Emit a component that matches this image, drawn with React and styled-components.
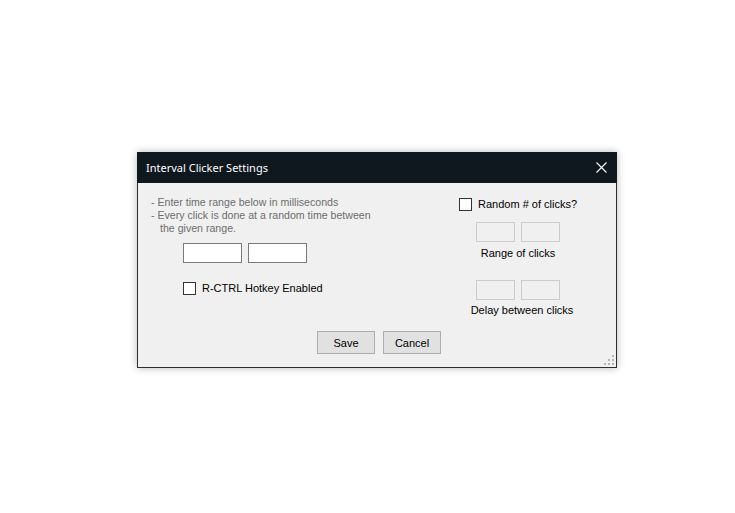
import styled, { createGlobalStyle } from "styled-components";

const GlobalStyle = createGlobalStyle`
  html, body {
    margin: 0;
    padding: 0;
    background: #ffffff;
  }
  body {
    font-family: "Liberation Sans", Arial, sans-serif;
  }
`;

const Page = styled.div`
  width: 735px;
  height: 513px;
  padding: 152px 0 0 137px;
  box-sizing: border-box;
`;

const Window = styled.div`
  position: relative;
  width: 480px;
  height: 216px;
  box-sizing: border-box;
  border: 1px solid #2e2e2e;
  border-top: none;
  background: #f0f0f0;
  box-shadow: 0 0 8px rgba(0, 0, 0, 0.28);
  display: flex;
  flex-direction: column;
`;

const TitleBar = styled.div`
  height: 31px;
  margin: 0 -1px;
  background: #0f171f;
  display: flex;
  align-items: center;
  justify-content: space-between;
  padding: 0 10px 0 9px;
  flex-shrink: 0;
`;

const Title = styled.span`
  color: #ffffff;
  font-family: "Noto Sans", "Open Sans", sans-serif;
  font-size: 11px;
  padding-bottom: 1px;
`;

const CloseButton = styled.svg`
  width: 11px;
  height: 11px;
  margin-top: -1px;
`;

const Content = styled.div`
  display: flex;
  padding: 13px 0 0 13px;
  font-size: 11px;
  line-height: 13px;
`;

const LeftColumn = styled.div`
  width: 308px;
  display: flex;
  flex-direction: column;
`;

const Notes = styled.div`
  color: #6d6d6d;
  font-size: 10.6px;
`;

const NoteLine = styled.div`
  padding-left: ${(p) => p.indent || 0}px;
  white-space: pre;
`;

const InputRow = styled.div`
  display: flex;
  gap: 6px;
  margin: ${(p) => p.mt || 0}px 0 0 ${(p) => p.ml || 0}px;
`;

const TextBox = styled.div`
  width: ${(p) => p.w}px;
  height: 20px;
  box-sizing: border-box;
  border: 1px solid ${(p) => (p.disabled ? "#cccccc" : "#7a7a7a")};
  background: ${(p) => (p.disabled ? "#f0f0f0" : "#ffffff")};
`;

const CheckRow = styled.label`
  display: flex;
  align-items: center;
  gap: 6px;
  color: #000000;
  font-size: 11px;
  margin: ${(p) => p.mt || 0}px 0 0 ${(p) => p.ml || 0}px;
`;

const CheckBox = styled.span`
  width: 13px;
  height: 13px;
  box-sizing: border-box;
  border: 1px solid #333333;
  background: #ffffff;
  flex-shrink: 0;
`;

const RightColumn = styled.div`
  display: flex;
  flex-direction: column;
  padding-top: 2px;
`;

const Group = styled.div`
  display: flex;
  flex-direction: column;
  align-items: center;
  width: 100px;
  margin: ${(p) => p.mt}px 0 0 9px;
`;

const Caption = styled.div`
  color: #000000;
  font-size: 11px;
  margin-top: ${(p) => p.gap || 4}px;
  padding-left: ${(p) => p.shift || 0}px;
  white-space: nowrap;
`;

const Footer = styled.div`
  display: flex;
  justify-content: center;
  gap: 8px;
  margin-top: auto;
  margin-bottom: 13px;
  padding-left: 4px;
`;

const Button = styled.div`
  width: ${(p) => p.w}px;
  height: 23px;
  box-sizing: border-box;
  border: 1px solid #adadad;
  background: #e1e1e1;
  display: flex;
  align-items: center;
  justify-content: center;
  font-size: 11px;
  color: #000000;
`;

const Grip = styled.svg`
  position: absolute;
  right: 2px;
  bottom: 2px;
  width: 10px;
  height: 10px;
`;

function App() {
  return (
    <Page>
      <GlobalStyle />
      <Window>
        <TitleBar>
          <Title>Interval Clicker Settings</Title>
          <CloseButton viewBox="0 0 11 11">
            <path d="M0.5 0.5 L10.5 10.5 M10.5 0.5 L0.5 10.5" stroke="#ffffff" strokeWidth="1.1" />
          </CloseButton>
        </TitleBar>
        <Content>
          <LeftColumn>
            <Notes>
              <NoteLine>- Enter time range below in milliseconds</NoteLine>
              <NoteLine>- Every click is done at a random time between</NoteLine>
              <NoteLine indent={9}>the given range.</NoteLine>
            </Notes>
            <InputRow mt={8} ml={32}>
              <TextBox w={59} />
              <TextBox w={59} />
            </InputRow>
            <CheckRow mt={19} ml={32}>
              <CheckBox />
              R-CTRL Hotkey Enabled
            </CheckRow>
          </LeftColumn>
          <RightColumn>
            <CheckRow>
              <CheckBox />
              Random # of clicks?
            </CheckRow>
            <Group mt={11}>
              <InputRow>
                <TextBox w={39} disabled />
                <TextBox w={39} disabled />
              </InputRow>
              <Caption gap={5}>Range of clicks</Caption>
            </Group>
            <Group mt={20}>
              <InputRow>
                <TextBox w={39} disabled />
                <TextBox w={39} disabled />
              </InputRow>
              <Caption shift={8}>Delay between clicks</Caption>
            </Group>
          </RightColumn>
        </Content>
        <Footer>
          <Button w={58}>Save</Button>
          <Button w={58}>Cancel</Button>
        </Footer>
        <Grip viewBox="0 0 10 10">
          <rect x="8" y="0" width="2" height="2" fill="#b8b8b8" />
          <rect x="4" y="4" width="2" height="2" fill="#b8b8b8" />
          <rect x="8" y="4" width="2" height="2" fill="#b8b8b8" />
          <rect x="0" y="8" width="2" height="2" fill="#b8b8b8" />
          <rect x="4" y="8" width="2" height="2" fill="#b8b8b8" />
          <rect x="8" y="8" width="2" height="2" fill="#b8b8b8" />
        </Grip>
      </Window>
    </Page>
  );
}

export default App;
